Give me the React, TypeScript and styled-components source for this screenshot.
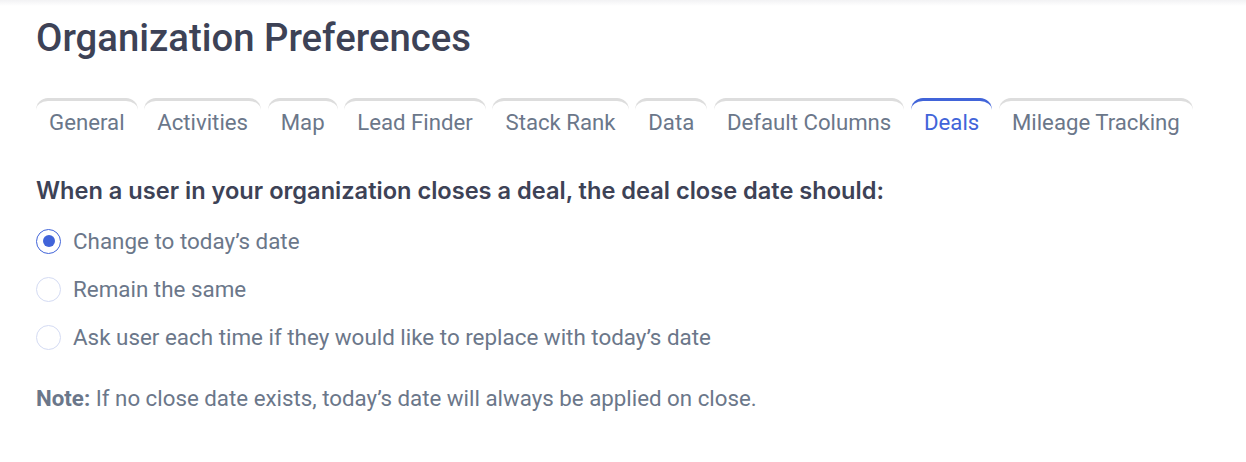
import React, { useState } from "react";
import styled, { createGlobalStyle } from "styled-components";

const GlobalStyle = createGlobalStyle`
  html, body {
    margin: 0;
    padding: 0;
    background: #fff;
  }
  body {
    font-family: Roboto, "Liberation Sans", sans-serif;
  }
`;

const Page = styled.div`
  width: 1246px;
  height: 462px;
  box-sizing: border-box;
  padding: 15px 36px 0;
  background: linear-gradient(to bottom, #f2f2f4 0px, #fff 6px);
`;

const Title = styled.h1`
  margin: 0;
  font-size: 38.3px;
  line-height: 46px;
  font-weight: 500;
  color: #3d4256;
`;

const Tabs = styled.div`
  display: flex;
  gap: 6.5px;
  margin-top: 37px;
`;

const Tab = styled.button<{ $active?: boolean }>`
  border: none;
  border-top: 3px solid ${(p) => (p.$active ? "#4164d9" : "#dddddd")};
  border-radius: 12px 12px 0 0;
  background: transparent;
  padding: 7px 13.1px 6px;
  font-family: Roboto, "Liberation Sans", sans-serif;
  font-size: 22.2px;
  line-height: 28px;
  color: ${(p) => (p.$active ? "#4164d9" : "#6b778a")};
  cursor: pointer;
`;

const Question = styled.h2`
  margin: 34px 0 0;
  font-family: Inter, "Liberation Sans", sans-serif;
  font-size: 23.6px;
  line-height: 30px;
  font-weight: 600;
  color: #3d4256;
`;

const Options = styled.div`
  display: flex;
  flex-direction: column;
  gap: 20px;
  margin-top: 21px;
`;

const Option = styled.label`
  display: flex;
  align-items: center;
  gap: 12px;
  font-size: 22.4px;
  line-height: 28px;
  color: #6b778a;
  cursor: pointer;
`;

const Radio = styled.span<{ $checked?: boolean }>`
  box-sizing: border-box;
  width: 25px;
  height: 25px;
  border-radius: 50%;
  border: ${(p) => (p.$checked ? "1.5px solid #4164d9" : "1px solid #d4dbf3")};
  display: flex;
  align-items: center;
  justify-content: center;

  &::after {
    content: "";
    width: 12px;
    height: 12px;
    border-radius: 50%;
    background: #4164d9;
    display: ${(p) => (p.$checked ? "block" : "none")};
  }
`;

const Note = styled.p`
  margin: 33px 0 0;
  font-size: 22.3px;
  line-height: 28px;
  color: #6b778a;

  strong {
    font-weight: 700;
  }
`;

const tabs = [
  "General",
  "Activities",
  "Map",
  "Lead Finder",
  "Stack Rank",
  "Data",
  "Default Columns",
  "Deals",
  "Mileage Tracking",
];

const options = [
  "Change to today\u2019s date",
  "Remain the same",
  "Ask user each time if they would like to replace with today\u2019s date",
];

const App = () => {
  const [tab, setTab] = useState("Deals");
  const [choice, setChoice] = useState(0);

  return (
    <Page>
      <GlobalStyle />
      <Title>Organization Preferences</Title>
      <Tabs>
        {tabs.map((t) => (
          <Tab key={t} $active={t === tab} onClick={() => setTab(t)}>
            {t}
          </Tab>
        ))}
      </Tabs>
      <Question>
        When a user in your organization closes a deal, the deal close date
        should:
      </Question>
      <Options>
        {options.map((o, i) => (
          <Option key={o} onClick={() => setChoice(i)}>
            <Radio $checked={choice === i} />
            {o}
          </Option>
        ))}
      </Options>
      <Note>
        <strong>Note:</strong> If no close date exists, today’s date will always
        be applied on close.
      </Note>
    </Page>
  );
};

export default App;
